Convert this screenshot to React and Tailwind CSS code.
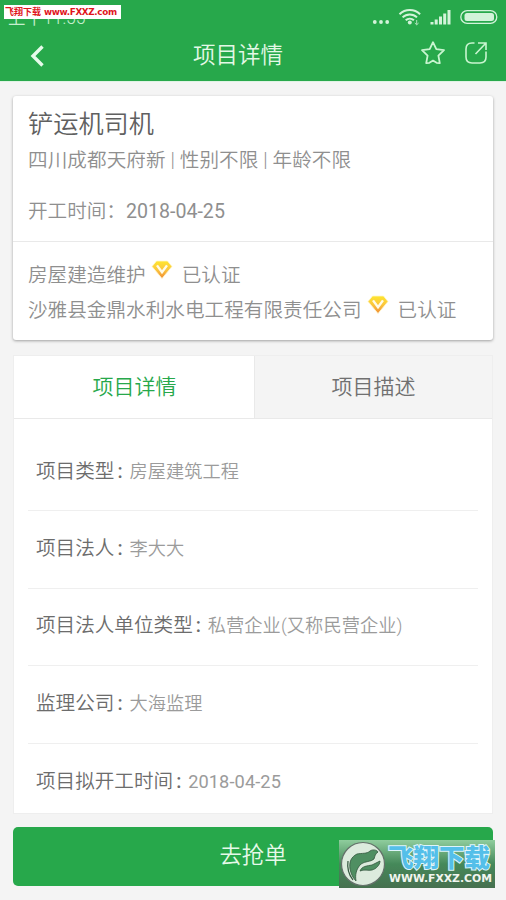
const details = [
    { label: "项目类型", value: "房屋建筑工程" },
    { label: "项目法人", value: "李大大" },
    { label: "项目法人单位类型", value: "私营企业(又称民营企业)" },
    { label: "监理公司", value: "大海监理" },
    { label: "项目拟开工时间", value: "2018-04-25", latin: true },
];

const StatusIcons = () => (
    <svg className="w-[130px] h-[20px]" viewBox="370 6 130 20" fill="none">
        <g fill="#d3f3da">
            <circle cx="374.8" cy="22" r="1.9" />
            <circle cx="381" cy="22" r="1.9" />
            <circle cx="387.2" cy="22" r="1.9" />
            <circle cx="409.8" cy="22.5" r="2" />
            <rect x="430.5" y="22" width="3" height="2.5" />
            <rect x="434.7" y="19.5" width="3" height="5" />
            <rect x="439" y="16.5" width="3" height="8" />
            <rect x="443.2" y="13.5" width="3" height="11" />
            <rect x="447.5" y="10" width="3" height="14.5" />
            <rect x="464.5" y="13" width="29.5" height="8" rx="2.5" />
        </g>
        <g stroke="#d3f3da" strokeWidth="2">
            <path d="M399.5 14.2a14.8 14.8 0 0 1 20.6 0" />
            <path d="M402.6 17.4a10.2 10.2 0 0 1 14.4 0" />
            <path d="M405.7 20.3a6 6 0 0 1 8.2 0" />
            <path d="M416.7 20v4.5M414.8 23l1.9 1.8 1.9-1.8" strokeWidth="0.8" />
            <rect x="460.8" y="10.6" width="36" height="12.8" rx="6.4" strokeWidth="1.3" />
        </g>
    </svg>
);

const Gem = ({ id }) => (
    <svg className="w-[22px] h-[20px] shrink-0" viewBox="0 0 22 20">
        <defs>
            <linearGradient id={id} x1="0" y1="0" x2="0" y2="1">
                <stop offset="0" stopColor="#ffe62e" />
                <stop offset="0.5" stopColor="#fbc63d" />
                <stop offset="1" stopColor="#f08a35" />
            </linearGradient>
        </defs>
        <path d="M5.5 1h11L21 6.5 11 18.5 1 6.5z" fill={`url(#${id})`} stroke="#fff6c9" strokeWidth="0.8" />
        <path d="M6 5.4l5 6.9 5-6.9" fill="none" stroke="#fffbe8" strokeWidth="2.4" />
    </svg>
);

const Header = () => (
    <header className="h-[82px] bg-[#27a84b] border-b border-[#dff3e4] flex flex-col">
        <div className="relative h-7 flex items-start justify-between pl-2 pr-1.5 pt-1.5">
            <span className="text-[17.5px] leading-[26px] text-[#c5efce] -mt-px">上午11:55</span>
            <StatusIcons />
            <div className="absolute left-1 top-[5px] w-[117px] h-[14px] bg-white text-[#e0141b] text-[9px] leading-[14px] font-bold whitespace-nowrap pl-[1px] flex gap-[3px]">
                <span>飞翔下载</span>
                <span className="font-['DejaVu_Sans'] text-[8.8px] tracking-[-0.35px]">www.FXXZ.com</span>
            </div>
        </div>
        <div className="h-[53px] grid grid-cols-[1fr_auto_1fr] items-center">
            <svg className="ml-[29px] mt-[3px] w-4 h-6" viewBox="0 0 16 24" fill="none" stroke="#e6fbea" strokeWidth="3.4">
                <path d="M13.5 2.5L4 12l9.5 9.5" />
            </svg>
            <h1 className="text-[22.5px] leading-none text-[#e3f8e6] -ml-[30px] pt-[2px]">项目详情</h1>
            <div className="flex justify-end items-center gap-[18px] pr-[18px] pb-[3px]">
                <svg className="w-[26px] h-[26px]" viewBox="0 0 26 26" fill="none" stroke="#c9f5d0" strokeWidth="1.8" strokeLinejoin="round">
                    <path d="M13 2.2l3.3 7 7.7 1-5.6 5.4 1.4 7.6-3.2-.4L13 20.6l-3.6 2.2-3.2.4 1.4-7.6L2 10.2l7.7-1z" />
                </svg>
                <svg className="w-[24px] h-[24px]" viewBox="0 0 24 24" fill="none" stroke="#c9f5d0" strokeWidth="1.6">
                    <path d="M10.5 2H8Q2 2 2 8v8q0 6 6 6h8q6 0 6-6v-5.5" />
                    <path d="M14 2h8v7M22 2L11.5 13" />
                </svg>
            </div>
        </div>
    </header>
);

const Verified = ({ name, id }) => (
    <div className="flex items-center h-[35px]">
        <span className="tracking-[0.03px]">{name}</span>
        <span className="ml-[5px] mr-[9px] -mt-3">
            <Gem id={id} />
        </span>
        <span>已认证</span>
    </div>
);

const Watermark = () => (
    <div className="absolute left-[339px] top-[840px] w-[156px] h-[48px] bg-linear-to-b from-[#8fcd9d] via-[#45895a] to-[#46704f] flex items-center">
        <svg className="w-[46px] h-[46px] ml-[1px] shrink-0" viewBox="0 0 46 46">
            <circle cx="23" cy="23" r="21.5" fill="#dcebdd" stroke="#64716a" strokeWidth="1.2" />
            <g fill="#4f8f62" stroke="#31553c" strokeWidth="0.8" strokeLinejoin="round">
                <path d="M38 11c-1-2-5-3-8-1-3 3-8 2-13 3-6 3-8 8-7 15 1 5 3 9 6 12-1-6 0-12 5-17 4-3 10-2 13-5 1-3 1-5 4-7z" />
                <path d="M20 30c2-5 7-5 12-6 3-1 5-3 8-4 0 4-4 8-8 9s-8-1-12 1z" />
            </g>
            <path d="M8 20c-1 7 1 14 5 19" fill="none" stroke="#31553c" strokeWidth="1.2" />
        </svg>
        <div className="ml-[2px] flex flex-col">
            <span className="text-[25.5px] leading-[28px] font-black text-[#54bfe9] [-webkit-text-stroke:2px_#dff5fb] [paint-order:stroke_fill] whitespace-nowrap">飞翔下载</span>
            <svg className="w-[105px] h-[12px]" viewBox="0 0 105 12">
                <text x="1" y="9.5" textLength="103" lengthAdjust="spacingAndGlyphs" fill="#f1f5ef" fontSize="10" fontWeight="700" fontFamily="DejaVu Sans">WWW.FXXZ.COM</text>
            </svg>
        </div>
    </div>
);

const App = () => {
    return (
        <div className="relative w-[506px] h-[900px] overflow-hidden bg-[#f4f4f4] font-[Roboto,'Noto_Sans_CJK_SC',sans-serif] font-[350]">
            <Header />
            <section className="mx-[13px] mt-[14px] h-[244px] bg-white rounded-[3px] shadow-[0_1px_3px_rgba(0,0,0,0.35)] text-[19.6px] text-[#8f8f8f]">
                <div className="h-[146px] px-[15px] pt-[11px] border-b border-[#e9e9e9]">
                    <h2 className="text-[25.2px] leading-[36px] text-[#606060]">铲运机司机</h2>
                    <p className="mt-px leading-[34px] whitespace-pre tracking-[0.07px]">四川成都天府新 | 性别不限 | 年龄不限</p>
                    <p className="mt-[17px] leading-[34px]">开工时间：<span className="font-normal">2018-04-25</span></p>
                </div>
                <div className="px-[15px] pt-4">
                    <Verified name="房屋建造维护" id="gem-a" />
                    <Verified name="沙雅县金鼎水利水电工程有限责任公司" id="gem-b" />
                </div>
            </section>
            <section className="mx-[13px] mt-[15px] h-[459px] bg-white border border-[#eeeeee]">
                <div className="h-[63px] grid grid-cols-[240px_1fr] text-center text-[21px] leading-[62px] border-b border-[#e9e9e9]">
                    <div className="text-[#27a84b] pl-px">项目详情</div>
                    <div className="bg-[#f4f4f4] border-l border-[#e9e9e9] text-[#707070]">项目描述</div>
                </div>
                <ul className="px-[14px] pt-[15px]">
                    {details.map((item) => (
                        <li key={item.label} className="h-[77.4px] flex items-center px-[8px] pb-[2px] border-b border-[#efefef] last:border-b-0">
                            <span className="text-[19.6px] text-[#6c6c6c]">{item.label}</span>
                            <span className="w-[15px] pl-[3px] text-[19.6px] font-medium text-[#6c6c6c]">:</span>
                            <span className={item.latin ? "text-[18.2px] text-[#9b9b9b] font-normal tracking-[0.1px]" : "text-[18.2px] text-[#9b9b9b] tracking-[0.1px]"}>{item.value}</span>
                        </li>
                    ))}
                </ul>
            </section>
            <button className="block mx-[13px] mt-[13px] w-[480px] h-[59px] rounded-[5px] bg-[#27a84b] text-[22.4px] text-[#e6f9e9] pb-px">去抢单</button>
            <Watermark />
        </div>
    );
};

export default App;
